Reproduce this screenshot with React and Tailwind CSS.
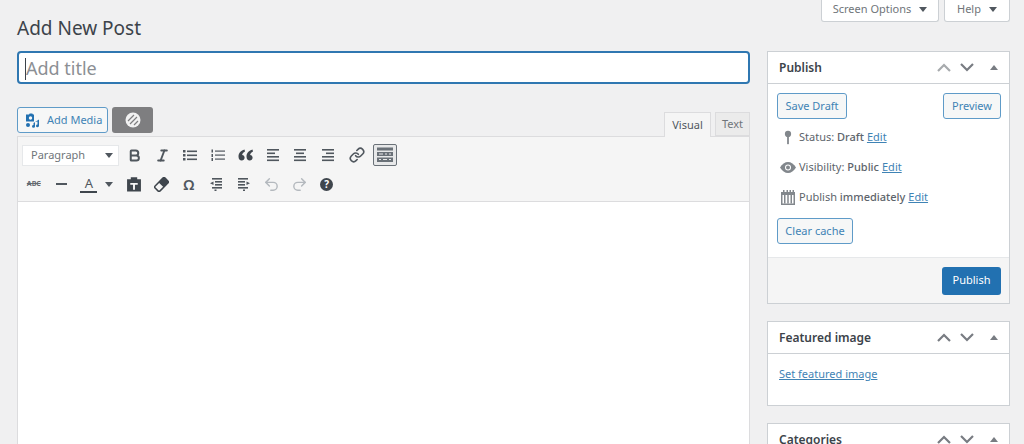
import { Bold, Italic, Link, Undo2, Redo2 } from 'lucide-react'

const tri = 'border-x-[4px] border-x-transparent'

function Bars({ rows, children }) {
  return (
    <svg width="14" height="14" viewBox="0 0 14 14" fill="#50575e">
      {rows.map((r, i) => (
        <rect key={i} x={r[0]} y={r[1]} width={r[2]} height={r[3] || 1.6} />
      ))}
      {children}
    </svg>
  )
}

function Clipboard() {
  return (
    <svg width="16" height="16" viewBox="0 0 15 15">
      <path d="M1 3h3.500V1.200h6V3H14v11.500H1z" fill="#3f464d" />
      <path d="M4 6.500h7v1.800H8.400V13H6.600V8.300H4z" fill="#f5f5f5" />
    </svg>
  )
}

function EraserIcon() {
  return (
    <svg width="15" height="15" viewBox="0 0 15 15">
      <g transform="rotate(-45 7.500 7.500)">
        <rect x="0.500" y="4" width="14" height="7" rx="1.500" fill="#f5f5f5" stroke="#3f464d" strokeWidth="1.500" />
        <path d="M7 4h6a1.500 1.500 0 0 1 1.500 1.500v4A1.500 1.500 0 0 1 13 11H7z" fill="#3f464d" />
      </g>
    </svg>
  )
}

function KitchenSink() {
  return (
    <svg width="18" height="16" viewBox="0 0 18 16" fill="#6a7178">
      <rect x="1" y="0.500" width="16" height="3" />
      <rect x="1" y="5" width="16" height="4" />
      <rect x="1" y="10.500" width="16" height="4.500" />
      <g fill="#e7e8e9">
        <rect x="3" y="6.500" width="4" height="1" />
        <rect x="9" y="6.500" width="2" height="1" />
        <rect x="13" y="6.500" width="2" height="1" />
        <rect x="3" y="12" width="2" height="1" />
        <rect x="7" y="12" width="4" height="1" />
        <rect x="13" y="12" width="2" height="1" />
      </g>
    </svg>
  )
}

function Chevron({ up, color }) {
  return (
    <svg width="14" height="9" viewBox="0 0 14 9" fill="none" stroke={color} strokeWidth="2.200">
      <path d={up ? 'M1 8l6-6 6 6' : 'M1 1l6 6 6-6'} />
    </svg>
  )
}

function Cell({ w = 'w-[27.6px]', className = '', children }) {
  return <div className={`${w} h-[24px] flex items-center justify-center shrink-0 text-[#50575e] ${className}`}>{children}</div>
}

function Toolbar() {
  return (
    <div className="h-[65px] bg-[#f5f5f5] border-b border-[#dcdcde] pt-[6px]">
      <div className="flex items-center pl-[4px] h-[24px]">
        <div className="w-[97px] h-[21px] bg-white border border-[#e6e8ea] flex items-center justify-between pl-[8px] pr-[5px] text-[11px] text-[#70757a] mr-[2px]">
          <span>Paragraph</span>
          <span className={`${tri} border-t-[5px] border-t-[#50575e]`} />
        </div>
        <Cell><Bold size={15} strokeWidth={3.2} /></Cell>
        <Cell><Italic size={15} strokeWidth={3} /></Cell>
        <Cell><Bars rows={[[0,2,2.500,2.500],[4,2.500,10],[0,6,2.500,2.500],[4,6.500,10],[0,10,2.500,2.500],[4,10.500,10]]} /></Cell>
        <Cell><Bars rows={[[0.500,1.500,1.500,3],[4,2.500,10,1.200],[0.500,6,1.500,3],[4,6.500,10,1.200],[0.500,10,1.500,3],[4,10.500,10,1.200]]} /></Cell>
        <Cell>
          <svg width="15" height="12" viewBox="0 0 15 12" fill="#3f464d">
            <path d="M6.500 0.500C3 1.500 0.500 4 0.500 7.500c0 2.400 1.300 4 3.200 4 1.600 0 2.900-1.200 2.900-2.800 0-1.500-1-2.600-2.500-2.700C4.400 4.500 5.300 3.200 7 2.500z" />
            <path d="M14.500 0.500C11 1.500 8.500 4 8.500 7.500c0 2.400 1.300 4 3.200 4 1.600 0 2.900-1.200 2.900-2.800 0-1.500-1-2.600-2.500-2.700.3-1.500 1.200-2.800 2.900-3.500z" />
          </svg>
        </Cell>
        <Cell><Bars rows={[[1,1,12],[1,4.500,8],[1,8,12],[1,11.500,12]]} /></Cell>
        <Cell><Bars rows={[[1,1,12],[3,4.500,8],[1,8,12],[1,11.500,12]]} /></Cell>
        <Cell><Bars rows={[[1,1,12],[5,4.500,8],[1,8,12],[1,11.500,12]]} /></Cell>
        <Cell className="ml-[1px]"><Link size={16} strokeWidth={2.400} /></Cell>
        <div className="ml-[3px] w-[24px] h-[22px] flex items-center justify-center bg-[#e7e8e9] border border-[#6a7178] rounded-[2px]">
          <KitchenSink />
        </div>
      </div>
      <div className="flex items-center pl-[2px] h-[24px] mt-[5px]">
        <Cell><span className="text-[7px] font-bold line-through text-[#646970]">ABC</span></Cell>
        <Cell><div className="w-[11px] h-[2px] bg-[#50575e]" /></Cell>
        <Cell>
          <div className="flex flex-col items-center">
            <span className="text-[13px] leading-[15px] text-[#50575e]">A</span>
            <div className="w-[17px] h-[2px] bg-[#3f464d]" />
          </div>
        </Cell>
        <Cell w="w-[12px]"><span className={`${tri} border-t-[5px] border-t-[#50575e]`} /></Cell>
        <Cell className="ml-[5px]"><Clipboard /></Cell>
        <Cell><EraserIcon /></Cell>
        <Cell><span className="text-[15px] font-semibold">Ω</span></Cell>
        <Cell>
          <Bars rows={[[3,1,10],[6,4,7],[6,7,7],[3,10,10],[5.500,12.500,2,1.500]]}>
            <path d="M4.500 4.500v3.500L1 6.250z" />
          </Bars>
        </Cell>
        <Cell>
          <Bars rows={[[1,1,10],[1,4,7],[1,7,7],[1,10,10],[6,12.500,2,1.500]]}>
            <path d="M9.500 4.500v3.500l3.500-1.750z" />
          </Bars>
        </Cell>
        <Cell><Undo2 size={17} strokeWidth={2} className="text-[#b4b9be]" /></Cell>
        <Cell><Redo2 size={17} strokeWidth={2} className="text-[#b4b9be]" /></Cell>
        <Cell>
          <span className="w-[13px] h-[13px] rounded-full bg-[#3f464d] text-white text-[10px] font-bold leading-[13px] text-center">?</span>
        </Cell>
      </div>
    </div>
  )
}

function Editor() {
  return (
    <div className="flex-1 min-w-0">
      <div className="h-[33px] bg-white border-2 border-[#2f77b1] rounded-[4px] flex items-center pl-[6px] pt-[2px] text-[18px] text-[#8c8f94]">
        <span className="w-px h-[22px] bg-[#3c434a]" />
        <span>Add title</span>
      </div>
      <div className="flex items-end justify-between h-[52px]">
        <div className="flex gap-[4px] mb-[3px]">
          <div className="w-[91px] h-[26px] bg-[#f6f7f7] border border-[#5f9bc8] rounded-[3px] flex items-center pl-[7px] gap-[7px] text-[11px] text-[#3f83b5] whitespace-nowrap">
            <svg width="15" height="15" viewBox="0 0 15 15" fill="#2271b1" className="shrink-0">
              <path d="M1 1.500h3l.7-1h2.600l.7 1h1v7H1z" />
              <circle cx="5.500" cy="5" r="1.700" fill="#f6f7f7" />
              <path d="M14 6.500v6.300a1.500 1.400 0 1 1-1.500-1.300V8.500l-2.500.6v4.300a1.500 1.400 0 1 1-1.500-1.400V10z" />
              <circle cx="3" cy="12" r="2" />
            </svg>
            <span>Add Media</span>
          </div>
          <div className="w-[41px] h-[26px] bg-[#7e7e80] rounded-[3px] flex items-center justify-center">
            <svg width="16" height="16" viewBox="0 0 16 16">
              <circle cx="8" cy="8" r="7.500" fill="#f2f2f2" />
              <path d="M3 9l6-6M5 12l7-7M9 13l4-4" stroke="#7e7e80" strokeWidth="1.200" fill="none" />
            </svg>
          </div>
        </div>
        <div className="flex items-end gap-[4px]">
          <div className="w-[47px] h-[25px] bg-[#f5f5f5] border border-b-0 border-[#dcdcde] flex items-center justify-center text-[11px] text-[#50575e] relative top-px">Visual</div>
          <div className="w-[35px] h-[24px] bg-[#ebebeb] border border-[#dcdcde] flex items-center justify-center text-[11px] text-[#70757a]">Text</div>
        </div>
      </div>
      <div className="border border-[#dcdcde] bg-white h-[400px]">
        <Toolbar />
      </div>
    </div>
  )
}

function BoxHeader({ title, upColor = '#a7aaad' }) {
  return (
    <div className="h-[32px] border-b border-[#ccd0d4] flex items-center pl-[11px] pr-[11px] text-[#3c434a]">
      <span className="flex-1 text-[12px] font-semibold pt-[1px]">{title}</span>
      <span className="mr-[9px] flex"><Chevron up color={upColor} /></span>
      <span className="mr-[16px] flex"><Chevron color="#787c82" /></span>
      <span className={`${tri} border-b-[5px] border-b-[#787c82]`} />
    </div>
  )
}

function GhostButton({ children, className = '' }) {
  return (
    <div className={`h-[26px] bg-[#f6f7f7] border border-[#5f9bc8] rounded-[3px] flex items-center justify-center text-[11px] text-[#3f83b5] ${className}`}>
      {children}
    </div>
  )
}

function MiscRow({ icon, children, className = '' }) {
  return (
    <div className={`h-[16px] flex items-center text-[11px] text-[#5d646b] whitespace-pre ${className}`}>
      <span className="w-[22px] shrink-0 flex justify-center">{icon}</span>
      {children}
    </div>
  )
}

function EditLink() {
  return <span className="text-[#3f83b5] underline ml-[3px]">Edit</span>
}

function Sidebar() {
  return (
    <div className="w-[243px] shrink-0 flex flex-col gap-[17px]">
      <div className="bg-white border border-[#ccd0d4]">
        <BoxHeader title="Publish" />
        <div className="h-[173px] pt-[9px] pl-[9px] pr-[8px]">
          <div className="flex justify-between">
            <GhostButton className="w-[70px]">Save Draft</GhostButton>
            <GhostButton className="w-[58px]">Preview</GhostButton>
          </div>
          <MiscRow
            className="mt-[10px]"
            icon={
              <svg width="8" height="15" viewBox="0 0 9 15" fill="#82878c">
                <circle cx="4.500" cy="3.500" r="3.500" />
                <rect x="3.500" y="6" width="2" height="9" />
              </svg>
            }
          >
            Status: <b className="font-medium">Draft</b><EditLink />
          </MiscRow>
          <MiscRow
            className="mt-[14px]"
            icon={
              <svg width="16" height="11" viewBox="0 0 16 11">
                <path d="M0 5.500C2 2 5 0 8 0s6 2 8 5.500C14 9 11 11 8 11S2 9 0 5.500z" fill="#82878c" />
                <circle cx="8" cy="5.500" r="3" fill="#fff" />
                <circle cx="8" cy="5.500" r="2" fill="#82878c" />
              </svg>
            }
          >
            Visibility: <b className="font-medium">Public</b><EditLink />
          </MiscRow>
          <MiscRow
            className="mt-[14px]"
            icon={
              <svg width="14" height="15" viewBox="0 0 14 15" fill="#82878c">
                <path d="M0 2h2V0h1.500v2h2V0H7v2h1.500V0H10v2h1.500V0H13v2h1v13H0z" />
                <rect x="1.500" y="5" width="11" height="8.500" fill="#fff" />
                <rect x="3" y="5" width="1.500" height="8.500" />
                <rect x="6.250" y="5" width="1.500" height="8.500" />
                <rect x="9.500" y="5" width="1.500" height="8.500" />
              </svg>
            }
          >
            Publish <b className="font-medium">immediately</b><EditLink />
          </MiscRow>
          <GhostButton className="w-[76px] mt-[13px]">Clear cache</GhostButton>
        </div>
        <div className="h-[46px] bg-[#f5f5f5] border-t border-[#e6e8ea] flex items-center justify-end pr-[8px]">
          <div className="w-[59px] h-[28px] bg-[#2271b1] rounded-[3px] flex items-center justify-center text-[11px] text-white">Publish</div>
        </div>
      </div>
      <div className="bg-white border border-[#ccd0d4] h-[85px]">
        <BoxHeader title="Featured image" upColor="#787c82" />
        <div className="pt-[12px] pl-[11px] text-[11px] text-[#3f83b5] underline">Set featured image</div>
      </div>
      <div className="bg-white border border-[#ccd0d4] h-[40px]">
        <BoxHeader title="Categories" upColor="#787c82" />
      </div>
    </div>
  )
}

export default function App() {
  return (
    <div className="h-[444px] overflow-hidden bg-[#f0f0f1] font-['Noto_Sans',sans-serif]">
      <div className="h-[51px] flex justify-between items-start pl-[17px] pr-[14px]">
        <h1 className="mt-[14px] text-[19px] leading-[28px] text-[#3c434a]">Add New Post</h1>
        <div className="flex gap-[5px]">
          <div className="w-[118px] h-[22px] bg-white border border-t-0 border-[#ccd0d4] rounded-b-[3px] flex items-center justify-center gap-[8px] pb-[3px] text-[11px] text-[#70757a]">
            Screen Options
            <span className={`${tri} border-t-[5px] border-t-[#50575e]`} />
          </div>
          <div className="w-[66px] h-[22px] bg-white border border-t-0 border-[#ccd0d4] rounded-b-[3px] flex items-center justify-center gap-[8px] pb-[3px] text-[11px] text-[#70757a]">
            Help
            <span className={`${tri} border-t-[5px] border-t-[#50575e]`} />
          </div>
        </div>
      </div>
      <div className="flex gap-[17px] pl-[17px] pr-[14px]">
        <Editor />
        <Sidebar />
      </div>
    </div>
  )
}
